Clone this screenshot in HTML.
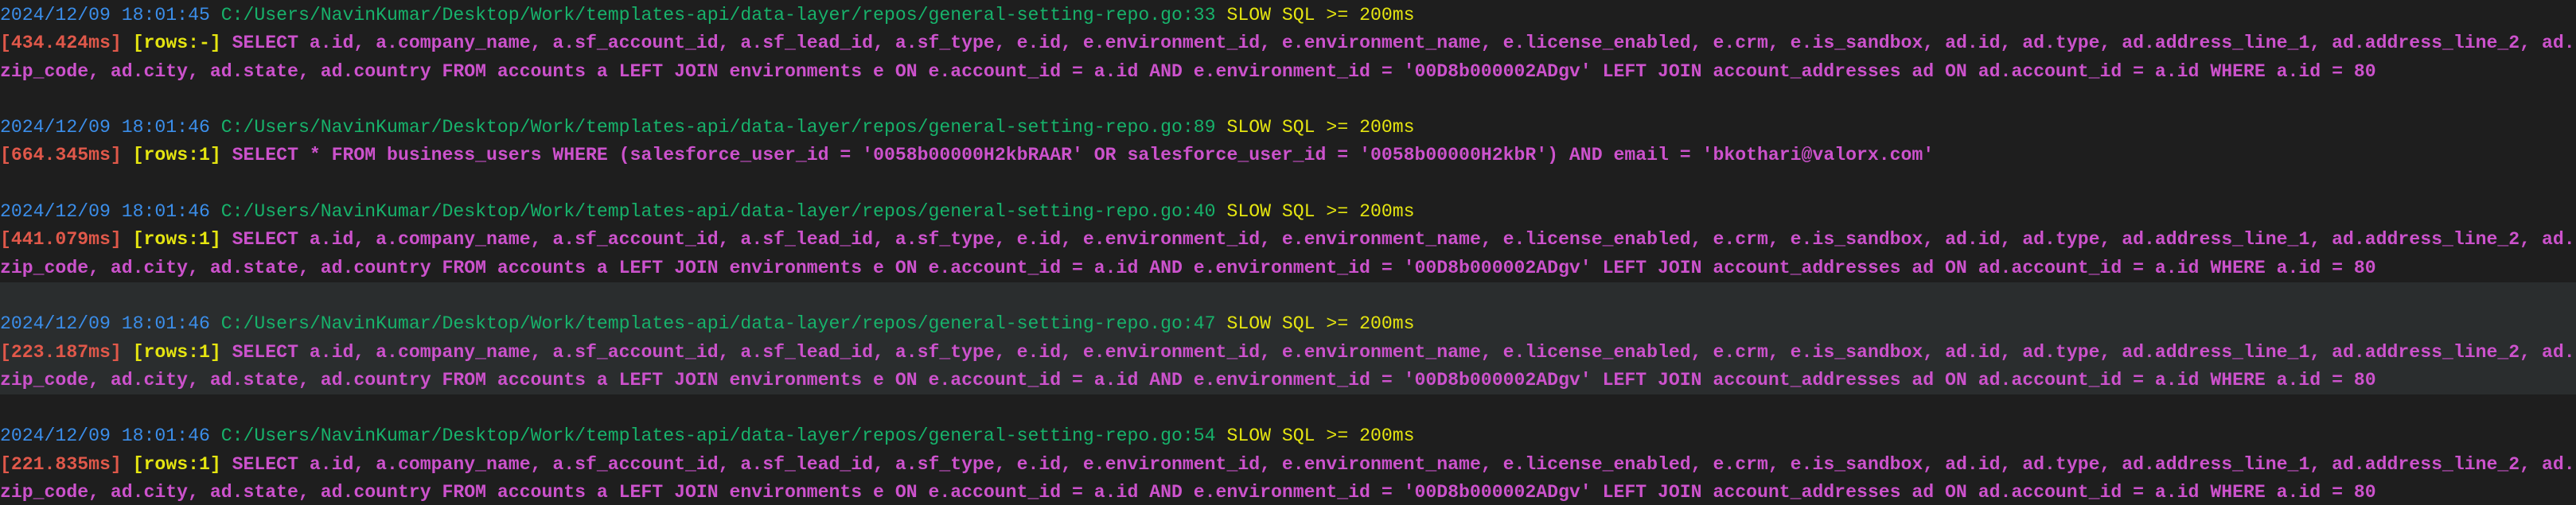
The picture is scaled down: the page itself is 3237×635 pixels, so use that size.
<!DOCTYPE html>
<html><head><meta charset="utf-8"><style>
html,body{margin:0;padding:0;background:#1e1e1e;width:3237px;height:635px;overflow:hidden}
.t{padding-top:2px;font-family:"Liberation Mono",monospace;font-size:23.15px;line-height:35.3px}
.l{height:35.3px;overflow:hidden;white-space:pre}
.b{font-weight:bold}
.hl{background:#2a2d2e}
.d{color:#3b8eea}.p{color:#17b26b}.y{color:#e5e510}.r{color:#e0584a}.m{color:#cc52cc}
</style></head><body><div class="t"><div class="l"><span class="d">2024/12/09 18:01:45</span> <span class="p">C:/Users/NavinKumar/Desktop/Work/templates-api/data-layer/repos/general-setting-repo.go:33</span> <span class="y">SLOW SQL &gt;= 200ms</span></div><div class="l b"><span class="r">[434.424ms]</span> <span class="y">[rows:-]</span> <span class="m">SELECT a.id, a.company_name, a.sf_account_id, a.sf_lead_id, a.sf_type, e.id, e.environment_id, e.environment_name, e.license_enabled, e.crm, e.is_sandbox, ad.id, ad.type, ad.address_line_1, ad.address_line_2, ad.</span></div><div class="l b m">zip_code, ad.city, ad.state, ad.country FROM accounts a LEFT JOIN environments e ON e.account_id = a.id AND e.environment_id = '00D8b000002ADgv' LEFT JOIN account_addresses ad ON ad.account_id = a.id WHERE a.id = 80</div><div class="l"></div><div class="l"><span class="d">2024/12/09 18:01:46</span> <span class="p">C:/Users/NavinKumar/Desktop/Work/templates-api/data-layer/repos/general-setting-repo.go:89</span> <span class="y">SLOW SQL &gt;= 200ms</span></div><div class="l b"><span class="r">[664.345ms]</span> <span class="y">[rows:1]</span> <span class="m">SELECT * FROM business_users WHERE (salesforce_user_id = '0058b00000H2kbRAAR' OR salesforce_user_id = '0058b00000H2kbR') AND email = 'bkothari@valorx.com'</span></div><div class="l"></div><div class="l"><span class="d">2024/12/09 18:01:46</span> <span class="p">C:/Users/NavinKumar/Desktop/Work/templates-api/data-layer/repos/general-setting-repo.go:40</span> <span class="y">SLOW SQL &gt;= 200ms</span></div><div class="l b"><span class="r">[441.079ms]</span> <span class="y">[rows:1]</span> <span class="m">SELECT a.id, a.company_name, a.sf_account_id, a.sf_lead_id, a.sf_type, e.id, e.environment_id, e.environment_name, e.license_enabled, e.crm, e.is_sandbox, ad.id, ad.type, ad.address_line_1, ad.address_line_2, ad.</span></div><div class="l b m">zip_code, ad.city, ad.state, ad.country FROM accounts a LEFT JOIN environments e ON e.account_id = a.id AND e.environment_id = '00D8b000002ADgv' LEFT JOIN account_addresses ad ON ad.account_id = a.id WHERE a.id = 80</div><div class="l hl"></div><div class="l hl"><span class="d">2024/12/09 18:01:46</span> <span class="p">C:/Users/NavinKumar/Desktop/Work/templates-api/data-layer/repos/general-setting-repo.go:47</span> <span class="y">SLOW SQL &gt;= 200ms</span></div><div class="l b hl"><span class="r">[223.187ms]</span> <span class="y">[rows:1]</span> <span class="m">SELECT a.id, a.company_name, a.sf_account_id, a.sf_lead_id, a.sf_type, e.id, e.environment_id, e.environment_name, e.license_enabled, e.crm, e.is_sandbox, ad.id, ad.type, ad.address_line_1, ad.address_line_2, ad.</span></div><div class="l b m hl">zip_code, ad.city, ad.state, ad.country FROM accounts a LEFT JOIN environments e ON e.account_id = a.id AND e.environment_id = '00D8b000002ADgv' LEFT JOIN account_addresses ad ON ad.account_id = a.id WHERE a.id = 80</div><div class="l"></div><div class="l"><span class="d">2024/12/09 18:01:46</span> <span class="p">C:/Users/NavinKumar/Desktop/Work/templates-api/data-layer/repos/general-setting-repo.go:54</span> <span class="y">SLOW SQL &gt;= 200ms</span></div><div class="l b"><span class="r">[221.835ms]</span> <span class="y">[rows:1]</span> <span class="m">SELECT a.id, a.company_name, a.sf_account_id, a.sf_lead_id, a.sf_type, e.id, e.environment_id, e.environment_name, e.license_enabled, e.crm, e.is_sandbox, ad.id, ad.type, ad.address_line_1, ad.address_line_2, ad.</span></div><div class="l b m">zip_code, ad.city, ad.state, ad.country FROM accounts a LEFT JOIN environments e ON e.account_id = a.id AND e.environment_id = '00D8b000002ADgv' LEFT JOIN account_addresses ad ON ad.account_id = a.id WHERE a.id = 80</div></div></body></html>
